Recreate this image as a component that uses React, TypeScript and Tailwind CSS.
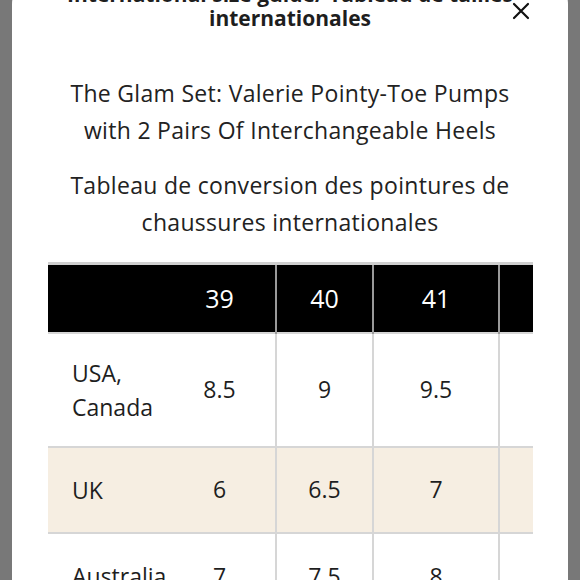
import React from "react";

const rows = [
  { label: ["USA,", "Canada"], vals: ["8.5", "9", "9.5", "10"], bg: "bg-white", h: "h-[114px]" },
  { label: ["UK"], vals: ["6", "6.5", "7", "7.5"], bg: "bg-[#f6eee2]", h: "h-[86px]" },
  { label: ["Australia"], vals: ["7", "7.5", "8", "8.5"], bg: "bg-white", h: "h-[86px]" },
];

export default function App() {
  const font = { fontFamily: "'Open Sans', 'Noto Sans', sans-serif" };
  return (
    <div className="w-[580px] h-[580px] overflow-hidden bg-[#787878] px-[12px]" style={font}>
      <div className="relative -mt-[20px] h-[620px] rounded-t-[24px] bg-white pt-[2px]">
        <button className="absolute right-[37px] top-[21px] h-[20px] w-[20px] text-[#111]">
          <svg viewBox="0 0 20 20" className="h-[20px] w-[20px]" fill="none" stroke="currentColor" strokeWidth="2.2" strokeLinecap="round">
            <path d="M3 3 L17 17 M17 3 L3 17" />
          </svg>
        </button>
        <h2 className="mx-auto w-[470px] text-center text-[21px] font-bold leading-[24px] text-[#1e1e1e]">
          International size guide/ Tableau de tailles internationales
        </h2>
        <p className="mt-[45px] text-center text-[23px] leading-[37px] tracking-[0.3px] text-[#222]">
          The Glam Set: Valerie Pointy-Toe Pumps
          <br />
          with 2 Pairs Of Interchangeable Heels
        </p>
        <p className="mt-[18px] text-center text-[23px] leading-[37px] tracking-[0.3px] text-[#222]">
          Tableau de conversion des pointures de
          <br />
          chaussures internationales
        </p>
        <div className="ml-[36px] mt-[21px] w-[485px] overflow-hidden">
          <table className="w-[561px] table-fixed border-collapse">
            <colgroup>
              <col className="w-[116px]" />
              <col className="w-[112px]" />
              <col className="w-[97px]" />
              <col className="w-[126px]" />
              <col className="w-[110px]" />
            </colgroup>
            <thead>
              <tr className="h-[69px] border-t-[3px] border-[#cfcfcf] bg-black text-white">
                <th className="font-normal"></th>
                <th className="text-center text-[25px] font-normal">39</th>
                <th className="border-l-2 border-[#9a9a9a] text-center text-[25px] font-normal">40</th>
                <th className="border-l-2 border-[#9a9a9a] text-center text-[25px] font-normal">41</th>
                <th className="border-l-2 border-[#9a9a9a] text-center text-[25px] font-normal">42</th>
              </tr>
            </thead>
            <tbody className="text-[23px] text-[#1e1e1e]">
              {rows.map((r, i) => (
                <tr key={i} className={`${r.bg} ${r.h} border-t-2 border-[#d6d6d6]`}>
                  <td className="whitespace-nowrap pl-[24px] text-left leading-[34px]">
                    {r.label.map((l, j) => (
                      <div key={j}>{l}</div>
                    ))}
                  </td>
                  <td className="text-center">{r.vals[0]}</td>
                  <td className="border-l-2 border-[#d6d6d6] text-center">{r.vals[1]}</td>
                  <td className="border-l-2 border-[#d6d6d6] text-center">{r.vals[2]}</td>
                  <td className="border-l-2 border-[#d6d6d6] text-center">{r.vals[3]}</td>
                </tr>
              ))}
            </tbody>
          </table>
        </div>
      </div>
    </div>
  );
}
